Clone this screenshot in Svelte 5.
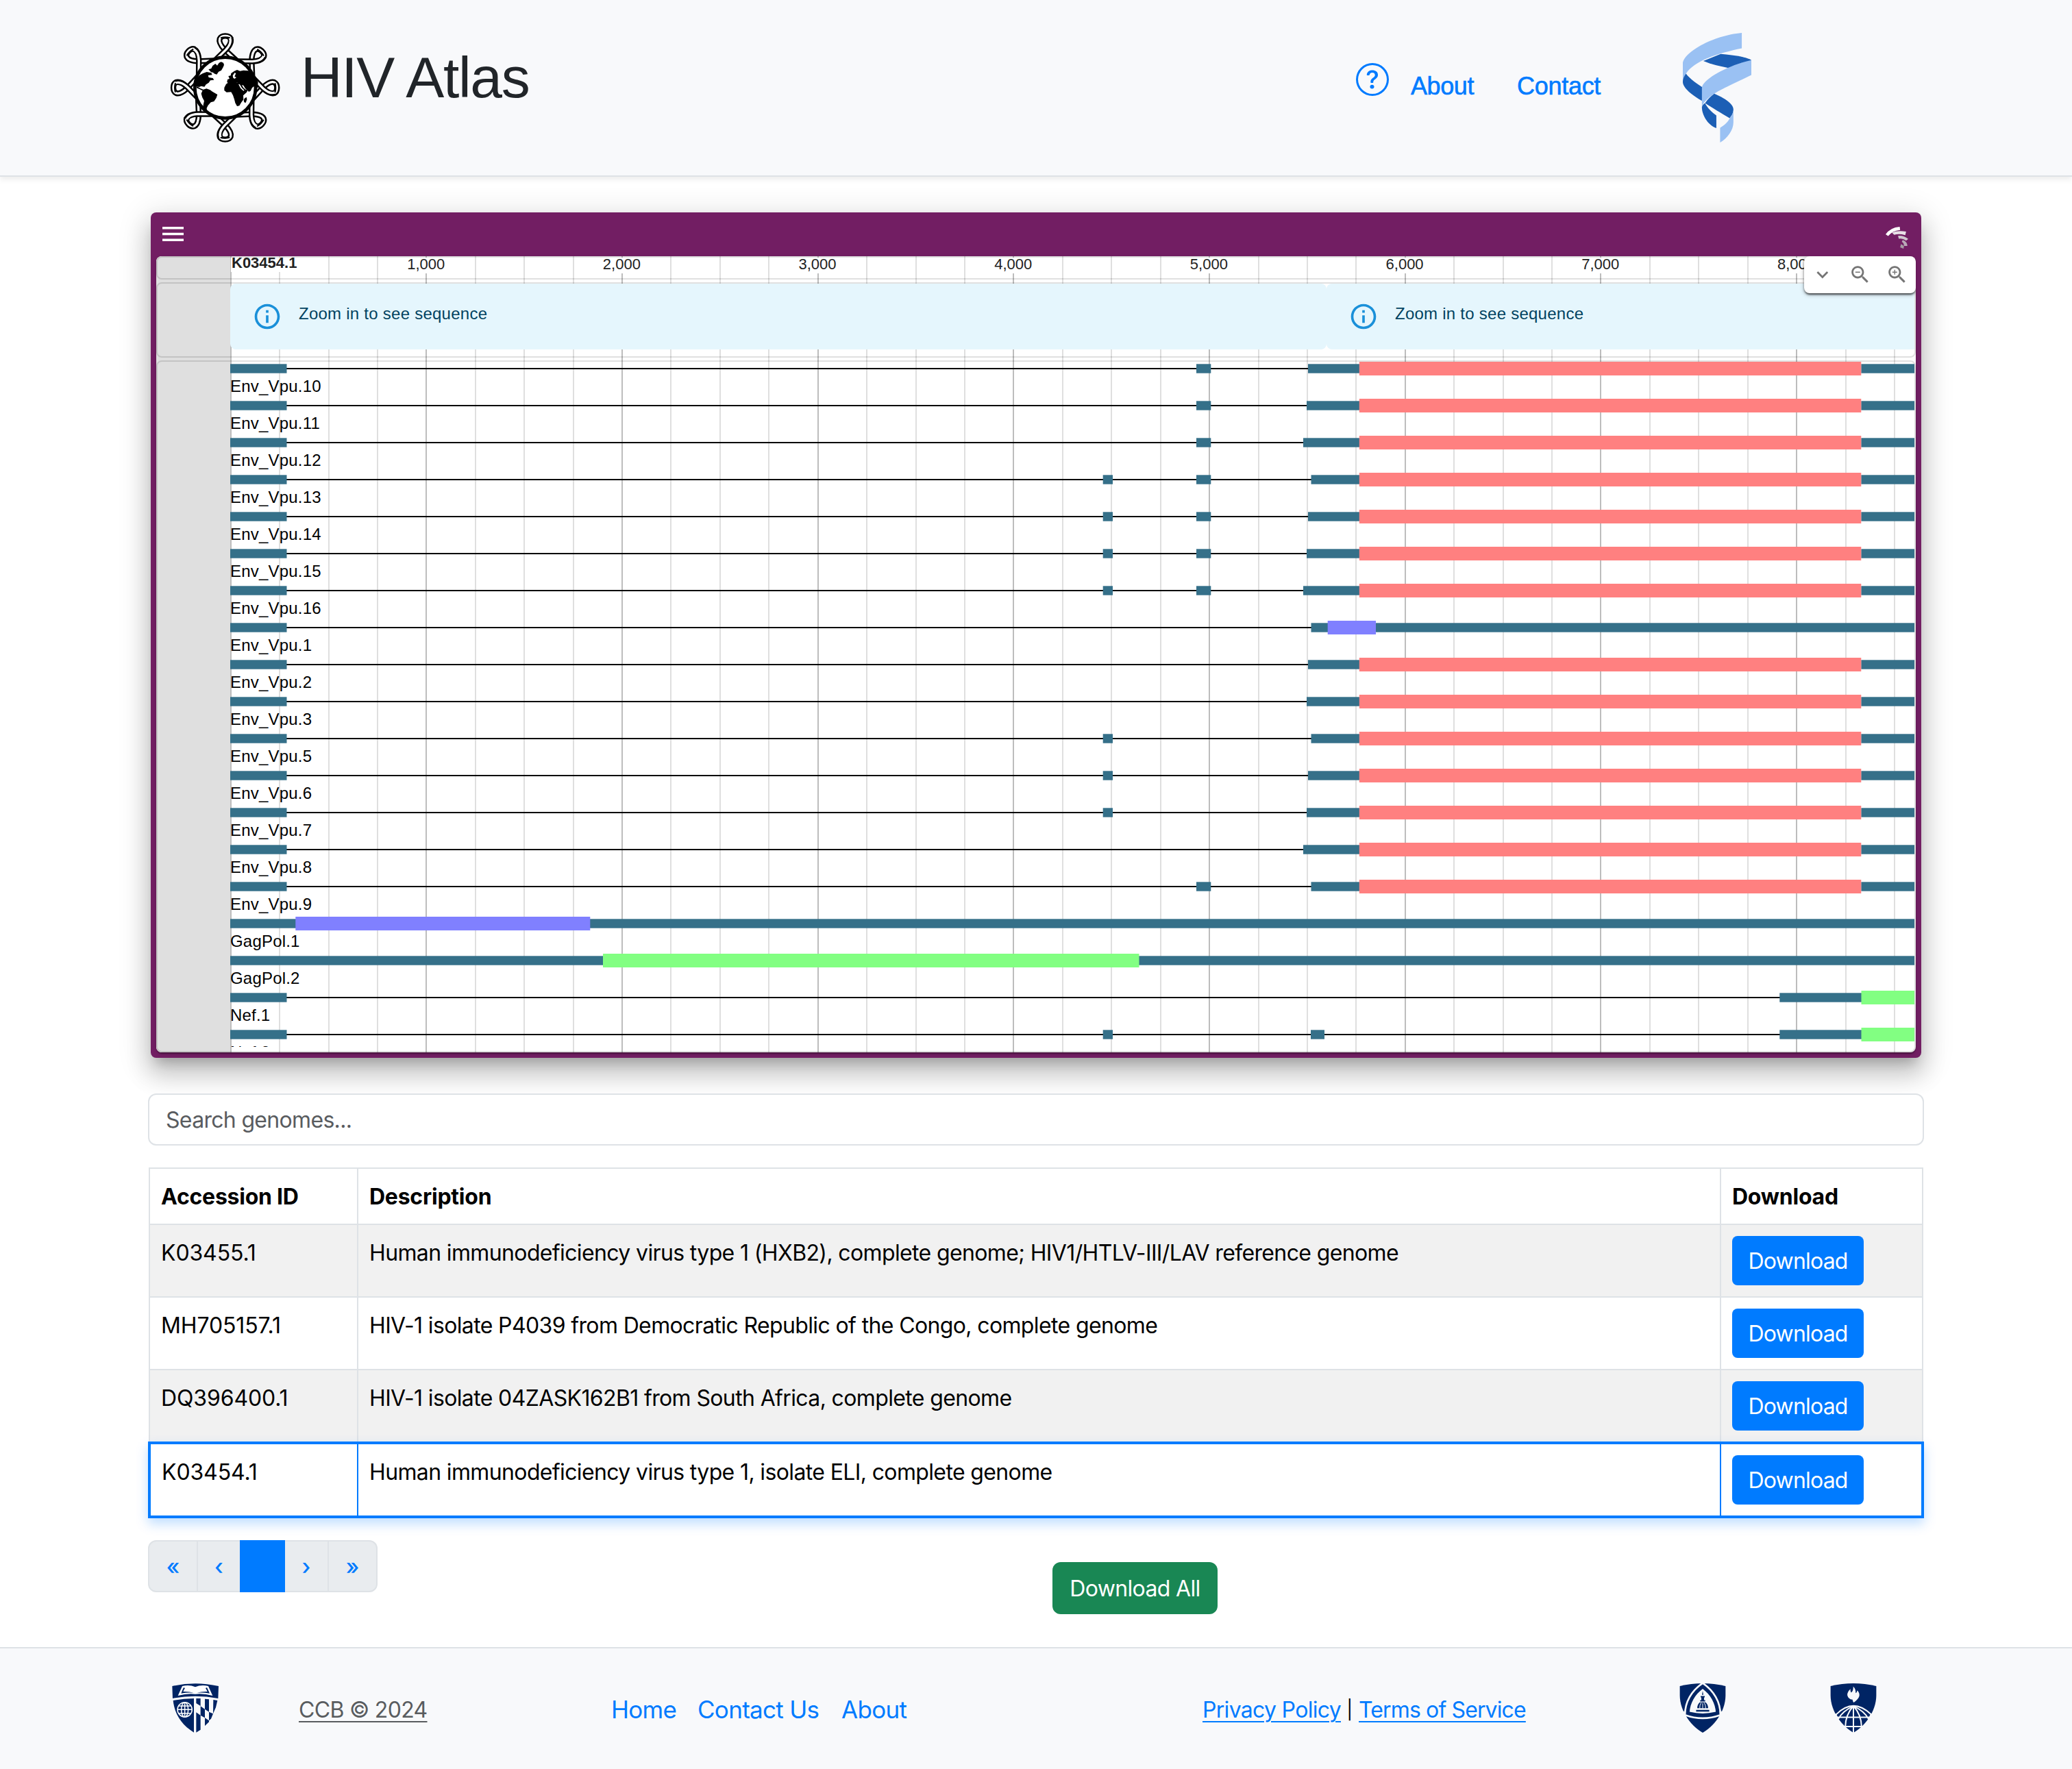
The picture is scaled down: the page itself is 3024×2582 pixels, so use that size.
<script>
  const X0 = 336.5;
  const PER_KB = 285.68;
  const END = 2794;
  const ticks = Array.from({ length: 35 }, (_, i) => ({
    x: X0 + (i * PER_KB) / 4,
    major: i % 4 === 0,
    label: i % 4 === 0 && i > 0 ? `${i / 4},000` : ''
  }));
  const major = ticks.filter((t) => t.label);

  // Shared exons, as [start, end] on the plot's x axis
  const U = [336, 418.5];
  const A = [1609.7, 1624];
  const B = [1746, 1767.3];
  const C = [1913, 1933];
  const env = (name, start, ...mid) => ({
    name,
    utr: [U, ...mid, [start, 1984], [2716.3, END]],
    cds: [1983.8, 2716.3],
    fill: '#ff8080'
  });
  const features = [
    env('Env_Vpu.10', 1909, B),
    env('Env_Vpu.11', 1907, B),
    env('Env_Vpu.12', 1902, B),
    env('Env_Vpu.13', 1913.5, A, B),
    env('Env_Vpu.14', 1909, A, B),
    env('Env_Vpu.15', 1907, A, B),
    env('Env_Vpu.16', 1902, A, B),
    { name: 'Env_Vpu.1', utr: [U, [1913.5, END]], cds: [1937.7, 2008], fill: '#8080ff' },
    env('Env_Vpu.2', 1909),
    env('Env_Vpu.3', 1907),
    env('Env_Vpu.5', 1913.5, A),
    env('Env_Vpu.6', 1909, A),
    env('Env_Vpu.7', 1907, A),
    env('Env_Vpu.8', 1902),
    env('Env_Vpu.9', 1913.5, B),
    { name: 'GagPol.1', utr: [[336, END]], cds: [431.3, 861.3], fill: '#8080ff' },
    { name: 'GagPol.2', utr: [[336, END]], cds: [880, 1662.5], fill: '#82ff82' },
    { name: 'Nef.1', utr: [U, [2597.3, 2717]], cds: [2716.5, END], fill: '#82ff82' },
    { name: 'Nef.2', utr: [U, A, C, [2597.3, 2717]], cds: [2716.5, END], fill: '#82ff82' }
  ];

  const genomes = [
    { id: 'K03455.1', text: 'Human immunodeficiency virus type 1 (HXB2), complete genome; HIV1/HTLV-III/LAV reference genome', odd: true },
    { id: 'MH705157.1', text: 'HIV-1 isolate P4039 from Democratic Republic of the Congo, complete genome' },
    { id: 'DQ396400.1', text: 'HIV-1 isolate 04ZASK162B1 from South Africa, complete genome', odd: true },
    { id: 'K03454.1', text: 'Human immunodeficiency virus type 1, isolate ELI, complete genome', selected: true }
  ];
</script>

{#snippet info()}
  <svg class="info" viewBox="0 0 24 24"><path fill="#1a90d9" d="M11 7h2v2h-2zm0 4h2v6h-2zm1-9C6.48 2 2 6.48 2 12s4.48 10 10 10 10-4.48 10-10S17.52 2 12 2m0 18c-4.41 0-8-3.59-8-8s3.59-8 8-8 8 3.59 8 8-3.59 8-8 8" /></svg>
{/snippet}

<div class="page">
  <header>
    <a class="brand" href="#home">
      <svg class="logo" viewBox="0 0 540 528">
        {#each [0, 45, 90, 135, 180, 225, 270, 315] as r}
          <g transform="rotate({r} 266 264)" fill="none">
            <path stroke="#000" stroke-width="25" d="M316 146L264 98Q236 68 242 50 248 37 266 37 285 37 291 50" />
            <path stroke="#fff" stroke-width="10" d="M316 146L264 98Q236 68 242 50 248 37 266 37 285 37 291 50" />
            <path stroke="#000" stroke-width="25" d="M289 47Q297 68 269 98L220 146" />
            <path stroke="#fff" stroke-width="10" d="M285 43Q298 66 269 98L220 146" />
            <path stroke="#000" stroke-width="6" d="M246 46Q266 40 287 46" />
          </g>
        {/each}
        <circle cx="266" cy="264" r="133" fill="#fff" stroke="#000" stroke-width="14" />
        <path d="M193 184l12-4 6-12 12-9 8 8 8-12 9-4 10 4 3 9-4 10-8 14-12 6-8 12-9-3-8-6-8-1z" />
        <path d="M140 226l13-16 14-8 18-7 20 4 4 9-18 2 3 9 18 3 5 8-16 2-7 10-12 8-7 10-14-3-9 4-14-3-6-14z" />
        <path d="M142 258l14 8 14 6-4 5-14-8-12-4z" />
        <path d="M168 273l16-5 16 6 10 7 22 13-5 15-10 15-14 4-12 13-6 12 1 16-18-12 2-17 4-18-8-15-5-17z" />
        <path d="M262 264l8-16 13-9 24-3 16 8 12 3 11 18 9 7 13-2-8 14-15 14 1 18-9 12-9 15-10 2-8-14-4-16-6-18-8-14-20 1-10-8z" />
        <path d="M274 240l2-12 9-3-5-12 10-2 2-10 14-10 12-5 13 5 15-3 22 2 14 6 18 20 10 24-2 26-16-8-8 6-7 14-8 4-6-8-9-6-8-14-12-3-8 2-8-12-12 4-9-4-13 5z" />
        <path fill="#fff" d="M299 211l8-12 6 2-6 14 8 4-8 6-6-4zM324 248l6 2 9 15 11 10-4 3-13-12z" />
        <path d="M352 309l8-3 1 10-5 14-7-2-2-10z" />
      </svg>
      <span class="title">HIV Atlas</span>
    </a>
    <nav class="topnav">
      <svg class="help" viewBox="0 0 16 16" fill="#007bff"><path d="M8 15A7 7 0 1 1 8 1a7 7 0 0 1 0 14m0 1A8 8 0 1 0 8 0a8 8 0 0 0 0 16" /><path d="M5.255 5.786a.237.237 0 0 0 .241.247h.825c.138 0 .248-.113.266-.25.09-.656.54-1.134 1.342-1.134.686 0 1.314.343 1.314 1.168 0 .635-.374.927-.965 1.371-.673.489-1.206 1.06-1.168 1.987l.003.217a.25.25 0 0 0 .25.246h.811a.25.25 0 0 0 .25-.25v-.105c0-.718.273-.927 1.01-1.486.609-.463 1.244-.977 1.244-2.056 0-1.511-1.276-2.241-2.673-2.241-1.267 0-2.655.59-2.75 2.286m1.557 5.763c0 .533.425.927 1.01.927.609 0 1.028-.394 1.028-.927 0-.552-.42-.94-1.029-.94-.584 0-1.009.388-1.009.94" /></svg>
      <a class="about" href="#about">About</a>
      <a class="contact" href="#contact">Contact</a>
    </nav>
    <svg class="helix" viewBox="1226 84 237 479" preserveAspectRatio="none">
      <path fill="#1c5fb5" d="M1357 176C1400 180 1450 190 1463 203L1440 225 1395 240C1360 232 1320 220 1297 207Z" />
      <path fill="#9ac1f3" d="M1430 84V151C1350 172 1265 205 1237 262L1226 300V220C1226 170 1330 95 1430 84Z" />
      <path fill="#1c5fb5" d="M1237 262C1250 285 1280 310 1294 322V382C1260 358 1226 325 1226 298 1226 285 1230 275 1237 262Z" />
      <path fill="#9ac1f3" d="M1463 203V268C1420 295 1350 335 1335 350 1310 370 1296 390 1292 408V325C1292 285 1390 222 1463 203Z" />
      <path fill="#1c5fb5" d="M1335 350C1370 368 1401 395 1401 418 1401 435 1395 445 1388 457 1360 435 1325 410 1303 391 1312 375 1322 362 1335 350Z" />
      <path fill="#1c5fb5" d="M1303 391C1310 410 1325 430 1342 445V500C1310 485 1292 440 1292 408 1294 400 1298 395 1303 391Z" />
      <path fill="#9ac1f3" d="M1401 418V475C1401 510 1380 545 1355 563V499C1370 487 1382 475 1388 457 1396 445 1401 435 1401 418Z" />
    </svg>
  </header>

  <main>
    <section class="browser">
      <div class="bar">
        <svg class="burger" viewBox="0 0 31 21" fill="#fff"><path d="M0 0h31v3.4H0zM0 8.8h31v3.4H0zM0 17.6h31V21H0z" /></svg>
        <svg class="jb" viewBox="1427 123 53 95" preserveAspectRatio="none">
          <path fill="#fff" d="M1427 156Q1438 126 1460 123L1461 137Q1442 141 1433 163Z" />
          <path fill="#e8e0e7" d="M1442 148Q1455 138 1475 144L1473 159Q1458 151 1447 158Z" />
          <path fill="#d0c6cf" d="M1456 162Q1470 160 1480 176L1475 183Q1467 172 1458 175Z" />
          <path fill="#b9a9b7" d="M1467 180Q1478 188 1478 206L1470 206Q1470 193 1465 188Z" />
          <path fill="#a69ba4" d="M1463 198L1470 206 1469 218 1461 212Z" />
        </svg>
      </div>
      <div class="view">
        <svg class="grid" viewBox="228 374 2568 1162">
          <rect x="228" y="374" width="108" height="1162" fill="#dfdfdf" />
          {#each ticks as t}
            <rect x={Math.round(t.x - 0.8)} y="374" width="2" height="1162" fill={t.major ? '#bdbdbd' : '#dfdfdf'} />
          {/each}
          <g class="ruler">
            <rect x="337" y="376" width="98" height="21" fill="#fff" />
            <text x="338" y="391" class="ref">K03454.1</text>
            {#each major as t}
              <rect x={t.x - 32} y="376" width="64" height="23" fill="#fff" />
              <text x={t.x - 0.5} y="393" text-anchor="middle">{t.label}</text>
            {/each}
          </g>
        </svg>
        <div class="panel p-ruler"></div>
        <div class="panel p-seq">
          <div class="alert a1">{@render info()}<span>Zoom in to see sequence</span></div>
          <div class="alert a2">{@render info()}<span>Zoom in to see sequence</span></div>
        </div>
        <div class="panel p-genes">
          <svg class="genes" viewBox="336 528 2458 1000">
            {#each features as f, i}
              {@const y = 538 + i * 54}
              <rect x="336" y={y - 1} width="2380" height="2" fill="#000" />
              {#each f.utr as [a, b]}
                <rect x={a} y={y - 6.7} width={b - a} height="13.4" fill="#357089" />
              {/each}
              <rect x={f.cds[0]} y={y - 10} width={f.cds[1] - f.cds[0]} height="20" fill={f.fill} />
              <text x="336" y={y + 34}>{f.name}</text>
            {/each}
          </svg>
        </div>
        <div class="tools">
          <svg viewBox="0 0 24 24"><path d="M7.41 8.59 12 13.17l4.59-4.58L18 10l-6 6-6-6z" /></svg>
          <svg viewBox="0 0 24 24"><path d="M15.5 14h-.79l-.28-.27C15.41 12.59 16 11.11 16 9.5 16 5.91 13.09 3 9.5 3S3 5.91 3 9.5 5.91 16 9.5 16c1.61 0 3.09-.59 4.23-1.57l.27.28v.79l5 4.99L20.49 19zm-6 0C7.01 14 5 11.99 5 9.5S7.01 5 9.5 5 14 7.01 14 9.5 11.99 14 9.5 14M7 9h5v1H7z" /></svg>
          <svg viewBox="0 0 24 24"><path d="M15.5 14h-.79l-.28-.27C15.41 12.59 16 11.11 16 9.5 16 5.91 13.09 3 9.5 3S3 5.91 3 9.5 5.91 16 9.5 16c1.61 0 3.09-.59 4.23-1.57l.27.28v.79l5 4.99L20.49 19zm-6 0C7.01 14 5 11.99 5 9.5S7.01 5 9.5 5 14 7.01 14 9.5 11.99 14 9.5 14m2.5-4h-2v2H9v-2H7V9h2V7h1v2h2z" /></svg>
        </div>
      </div>
    </section>

    <div class="search"><span>Search genomes...</span></div>

    <div class="table">
      <div class="row head">
        <div>Accession ID</div>
        <div>Description</div>
        <div>Download</div>
      </div>
      {#each genomes as g}
        <div class="row" class:odd={g.odd} class:selected={g.selected}>
          <div>{g.id}</div>
          <div class="desc">{g.text}</div>
          <div class="cell-btn"><button class="btn">Download</button></div>
        </div>
      {/each}
    </div>

    <div class="actions">
      <div class="pager">
        <span class="e1">«</span><span class="e2">‹</span><span class="on"></span><span class="e3">›</span><span class="e4">»</span>
      </div>
      <button class="all">Download All</button>
    </div>
  </main>

  <footer>
    <svg class="shield s1" viewBox="63 201 204 216" fill="#002464">
      <path d="M64 213Q165 190 267 213L265 267Q165 247 66 267Z" />
      <path fill="#fff" d="M108 213Q140 206 165 217 190 206 222 213L241 255Q200 244 165 248 130 244 89 255Z" />
      <path d="M114 219Q107 233 103 245 128 240 158 242 138 236 112 237 115 229 120 222ZM216 219Q223 233 228 245 202 240 172 242 192 236 218 237 215 229 210 222Z" />
      <path d="M68 276Q115 267 159 267V416C108 384 75 340 68 276Z" />
      <path d="M169 267H188V300L169 288ZM169 328L188 341V404L169 416ZM188 301L207 314V352L188 341ZM207 269L225 271V326L207 314ZM207 352L225 364V370L207 387ZM225 326L243 334 234 356 225 364ZM244 273L262 276Q258 305 243 334Z" />
      <g fill="none" stroke="#fff" stroke-width="4.5"><circle cx="119" cy="316" r="32" /><ellipse cx="119" cy="316" rx="15" ry="32" /><path d="M119 284V348M87 316H151M92 300H146M92 332H146" /></g>
    </svg>
    <a class="ccb" href="#ccb">CCB © 2024</a>
    <nav class="links"><a class="f1" href="#home">Home</a><a class="f2" href="#contact">Contact Us</a><a class="f3" href="#about">About</a></nav>
    <div class="legal"><a class="l1" href="#privacy">Privacy Policy</a><span>|</span><a class="l2" href="#terms">Terms of Service</a></div>
    <svg class="shield s2" viewBox="93 112 204 218" fill="#002464">
      <path d="M94 124Q195 100 296 124V165C296 240 240 305 195 330 150 305 94 240 94 165Z" />
      <path fill="none" stroke="#f8f9fb" stroke-width="8" d="M195 111C245 145 274 195 273 252Q195 280 117 252C116 195 145 145 195 111Z" />
      <path fill="#f8f9fb" d="M114 235L122 256 110 262 98 240ZM276 235L268 256 280 262 292 240Z" />
      <path fill="#f8f9fb" d="M195 136C230 162 250 200 253 238Q195 253 137 238C140 200 160 162 195 136Z" />
      <path d="M195 145L198 163H192ZM186 168H204V174H201V186H206V192H184V186H189V174H186ZM182 196H208Q219 205 219 222H171Q171 205 182 196ZM166 229H224V237H166Z" />
      <path fill="none" stroke="#f8f9fb" stroke-width="3" d="M188 198Q181 208 182 223M202 198Q209 208 208 223M195 200V223" />
    </svg>
    <svg class="shield s3" viewBox="753 112 204 218" fill="#002464">
      <path d="M754 124Q855 100 956 124V165C956 240 900 305 855 330 810 305 754 240 754 165Z" />
      <path fill="#f8f9fb" d="M765 250L779 246 790 270 776 280ZM945 250L931 246 920 270 934 280Z" />
      <path fill="#f8f9fb" d="M854 126Q866 138 865 155 871 152 872 143 884 155 881 168 877 182 856 197 852 193 851 184 832 182 828 164 828 148 842 137 840 148 845 153 856 145 854 126Z" />
      <g fill="none" stroke="#f8f9fb" stroke-width="6"><path d="M778 250Q855 173 934 250" /><path d="M855 212V330M855 212Q805 235 788 270M855 212Q820 250 819 305M855 212Q905 235 922 270M855 212Q890 250 891 305M780 262H930M806 303H904" /></g>
    </svg>
  </footer>
</div>

<style>
  :global(body) { margin: 0; background: #fff; }
  * { box-sizing: border-box; }
  a { text-decoration: none; color: #007bff; }
  svg { display: block; flex: none; }
  .page { width: 3024px; height: 2582px; display: flex; flex-direction: column; font: 32px/48px Inter, sans-serif; color: #000; background: #fff; }

  header { height: 258px; flex: none; display: flex; align-items: flex-start; background: #f8f9fb; border-bottom: 2px solid #dee2e6; box-shadow: 0 4px 8px rgba(0, 0, 0, .075); padding: 40px 0 0 240px; }
  .brand { display: flex; width: 1739px; }
  .logo { width: 180px; height: 176px; }
  .title { font: 84px/96px 'Liberation Sans', sans-serif; letter-spacing: -1.35px; color: #212529; margin: 25px 0 0 19px; white-space: nowrap; }
  .topnav { display: flex; width: 477px; font: 36px/48px 'Liberation Sans', sans-serif; }
  .help { width: 48px; height: 48px; margin-top: 52px; }
  .topnav a { margin-top: 62px; -webkit-text-stroke: .6px #007bff; }
  .about { margin-left: 32px; letter-spacing: -.4px; }
  .contact { margin-left: 63px; letter-spacing: -.3px; }
  .helix { width: 100px; height: 160px; margin-top: 8px; }

  main { flex: 1; padding: 52px 216px 0; }
  .browser { width: 2584px; height: 1234px; margin-left: 4px; padding: 0 8px 8px; border-radius: 8px; background: #721e63; box-shadow: 0 14px 16px -8px rgba(0, 0, 0, .2), 0 24px 34px 4px rgba(0, 0, 0, .14), 0 10px 44px 8px rgba(0, 0, 0, .12); }
  .bar { height: 64px; display: flex; justify-content: space-between; align-items: flex-start; padding: 21px 11px 0 9px; }
  .burger { width: 31px; height: 21px; }
  .jb { width: 33px; height: 32px; }
  .view { position: relative; height: 1162px; width: 2568px; border-radius: 8px; overflow: hidden; background: #fff; display: flex; flex-direction: column; gap: 4px; box-shadow: 0 4px 2px -2px rgba(0, 0, 0, .2), 0 2px 2px rgba(0, 0, 0, .14), 0 2px 6px rgba(0, 0, 0, .12); }
  .grid { position: absolute; left: 0; top: 0; width: 2568px; height: 1162px; }
  .ruler text { font: 22px 'Liberation Sans', sans-serif; fill: #222; }
  .ruler .ref { font-weight: 700; }
  .panel { position: relative; border: 2px solid rgba(0, 0, 0, .12); border-radius: 8px; padding-left: 106px; flex: none; }
  .p-ruler { height: 34px; }
  .p-seq { height: 110px; display: flex; }
  .p-genes { height: 1010px; }
  .alert { height: 96px; border-radius: 8px; background: #e5f6fd; color: #014361; display: flex; font: 24px/34px 'Liberation Sans', sans-serif; letter-spacing: .25px; flex: none; }
  .a1 { width: 1600px; padding-left: 32px; }
  .a2 { width: 858px; padding-left: 32px; border-radius: 8px 0 0 8px; }
  .info { width: 44px; height: 44px; margin: 26px 24px 0 0; }
  .alert span { margin-top: 27px; }
  .genes { width: 2458px; height: 1000px; overflow: hidden; }
  .genes text { font: 24px 'Liberation Sans', sans-serif; letter-spacing: .2px; fill: #000; }
  .tools { position: absolute; right: 0; top: 0; width: 163px; height: 54px; border-radius: 8px; background: #fff; display: flex; align-items: center; padding-left: 10px; gap: 21px; box-shadow: 0 4px 2px -2px rgba(0, 0, 0, .3), 0 2px 3px rgba(0, 0, 0, .4), 0 2px 6px rgba(0, 0, 0, .3); }
  .tools svg { width: 33.6px; height: 33.6px; fill: #757575; }

  .search { height: 76px; margin-top: 52px; border: 2px solid #dee2e6; border-radius: 12px; background: #fff; padding: 13px 24px; color: #595c5f; letter-spacing: -.68px; }
  .table { width: 2590px; margin: 32px 0 0 1px; border: 2px solid #dee2e6; border-bottom: 0; }
  .row { display: grid; grid-template-columns: 302px 1989px 295px; height: 106px; border-bottom: 2px solid #dee2e6; }
  .row > div { padding: 17px 0 0 16px; white-space: nowrap; letter-spacing: -.12px; }
  .row > div + div { border-left: 2px solid #dee2e6; }
  .row.head { height: 82px; font-weight: 700; }
  .row.head > div { letter-spacing: -.24px; }
  .row > .desc { letter-spacing: -.63px; }
  .row > .cell-btn { padding-top: 16px; }
  .row.odd { background: #f1f1f1; }
  .row.selected { position: relative; width: 2592px; height: 112px; margin: -2px 0 0 -3px; grid-template-columns: 301px 1989px 294px; border: 4px solid #007bff; background: #fff; box-shadow: 0 8px 16px rgba(0, 123, 255, .25); }
  .row.selected > div + div { border-color: #007bff; }
  .btn { display: block; width: 192px; height: 72px; border: 0; border-radius: 8px; background: #007bff; color: #fff; font: 32px/48px Inter, sans-serif; letter-spacing: -.8px; padding: 2px 0 0; }

  .actions { display: flex; margin-top: 32px; }
  .pager { display: flex; height: 76px; width: 335px; color: #007bff; font-weight: 500; }
  .pager span { line-height: 73px; text-align: center; background: #e9ecef; border: 2px solid #dee2e6; border-left: 0; }
  .pager .e1 { width: 73px; border-left: 2px solid #dee2e6; border-radius: 12px 0 0 12px; }
  .pager .e2 { width: 61px; border-right: 0; }
  .pager .on { width: 66px; background: #007bff; border-color: #007bff; }
  .pager .e3 { width: 64px; }
  .pager .e4 { width: 71px; border-radius: 0 12px 12px 0; }
  .all { width: 241px; height: 76px; margin: 32px 0 0 985px; border: 0; border-radius: 12px; background: #198754; color: #fff; font: 32px/48px Inter, sans-serif; letter-spacing: -.65px; padding: 2px 0 0; white-space: nowrap; }

  footer { height: 178px; flex: none; display: flex; align-items: flex-start; background: #f8f9fb; border-top: 2px solid #dee2e6; padding: 51px 0 0 251px; white-space: nowrap; }
  .shield { width: 68px; height: 72px; }
  .ccb { width: 187px; margin: 15px 0 0 117px; color: #595c5f; letter-spacing: -.68px; }
  .ccb, .legal a { text-decoration: underline; text-decoration-thickness: 2px; text-underline-offset: 5px; }
  .links { display: flex; margin: 14px 0 0 269px; width: 863px; font-size: 35px; letter-spacing: -.7px; }
  .f1 { width: 126px; }
  .f2 { width: 210px; }
  .legal { display: flex; width: 696px; margin-top: 15px; letter-spacing: -.7px; }
  .l1 { width: 201px; }
  .legal span { width: 27px; text-align: center; font-size: 27px; }
  .l2 { letter-spacing: -.87px; }
  .s3 { margin-left: 152px; }
</style>
